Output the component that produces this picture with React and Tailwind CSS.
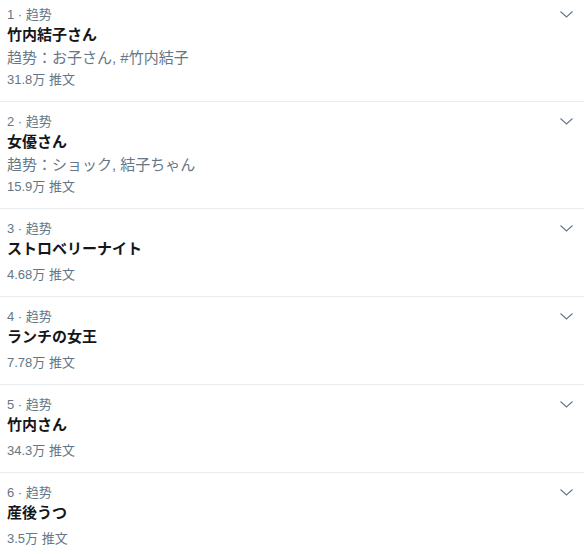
import React from 'react';

const trends = [
  { rank: 1, title: '竹内結子さん', sub: '趋势：お子さん, #竹内結子', count: '31.8万 推文' },
  { rank: 2, title: '女優さん', sub: '趋势：ショック, 結子ちゃん', count: '15.9万 推文' },
  { rank: 3, title: 'ストロベリーナイト', count: '4.68万 推文' },
  { rank: 4, title: 'ランチの女王', count: '7.78万 推文' },
  { rank: 5, title: '竹内さん', count: '34.3万 推文' },
  { rank: 6, title: '産後うつ', count: '3.5万 推文' },
];

const Chevron = () => (
  <svg width="13" height="7" viewBox="0 0 13 7" className="text-[#657786]">
    <polyline points="0.5,0.5 6.5,6 12.5,0.5" fill="none" stroke="currentColor" strokeWidth="1.1" />
  </svg>
);

const TrendRow = ({ trend, first }) => (
  <div className={`relative border-b border-[#e6ecf0] px-[7px] pb-[11px] ${first ? 'pt-[5px]' : 'pt-[10px]'}`}>
    <div className="absolute right-[11px] flex h-[18px] items-center" style={{ top: first ? 5 : 10 }}>
      <Chevron />
    </div>
    <div className="text-[13px] leading-[20px] text-[#657786]">{trend.rank} · 趋势</div>
    <div className="text-[15px] font-bold leading-[20px] text-[#14171a]">{trend.title}</div>
    {trend.sub && (
      <div className="mt-[3px] text-[15px] leading-[19px] text-[#657786]">{trend.sub}</div>
    )}
    <div className={`${trend.sub ? 'mt-[3px]' : 'mt-[6px]'} text-[13px] leading-[20px] text-[#657786]`}>{trend.count}</div>
  </div>
);

export default function App() {
  return (
    <div
      className="h-[554px] w-[584px] overflow-hidden bg-white"
      style={{ fontFamily: '"Liberation Sans", "Noto Sans CJK JP", sans-serif' }}
    >
      {trends.map((t, i) => (
        <TrendRow key={t.rank} trend={t} first={i === 0} />
      ))}
    </div>
  );
}
